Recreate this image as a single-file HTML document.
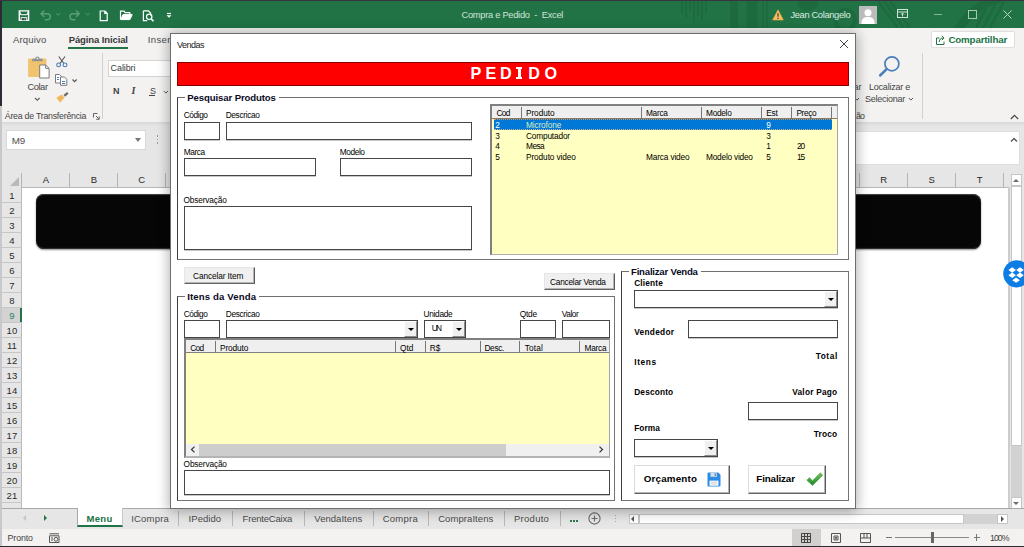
<!DOCTYPE html>
<html><head><meta charset="utf-8">
<style>
*{box-sizing:border-box;margin:0;padding:0}
html,body{width:1024px;height:547px;overflow:hidden;background:#fff;font-family:"Liberation Sans",sans-serif;font-size:11px;color:#000}
.a{position:absolute}
.t{position:absolute;white-space:nowrap;line-height:1}
#win{position:absolute;left:0;top:0;width:1024px;height:547px;background:#e6e6e6;overflow:hidden}
#dlg{left:170px;top:33px;width:686px;height:476px;background:#fff;border:1px solid #6e6e6e;box-shadow:0 1px 12px 1px rgba(0,0,0,.32)}
.tb{position:absolute;background:#fff;border:1px solid #464646;box-shadow:0 1px 0 rgba(0,0,0,.22)}
.fr{position:absolute;border:1px solid #747474;border-left-color:#3e3e3e;border-top-color:#707070}
.btn{position:absolute;background:#f0f0f0;border:1px solid #e6e6e6;border-right-color:#5a5a5a;border-bottom-color:#646464;box-shadow:inset -1px -1px 0 #b4b4b4}
.big{background:#fff;border-top-color:#dcdcdc;border-left-color:#dcdcdc}
.dd{position:absolute;width:12.700px;background:#f0f0f0;border:1px solid #fff;border-right-color:#8c8c8c;border-bottom-color:#8c8c8c}
.dd:after{content:"";position:absolute;left:2.500px;top:50%;margin-top:-1px;border:3px solid transparent;border-top:3px solid #000;border-bottom:0}
</style></head><body>
<div id="win">
<div class="a" style="left:0px;top:0px;width:1024px;height:547px;background:#e6e6e6;"></div>
<div class="a" style="left:2px;top:1px;width:1022px;height:27px;background:#217346;"></div>
<svg class="a" style="left:0;top:1px" width="1024" height="27" viewBox="0 1 1024 27"><g fill="none" stroke="#1e6a3f"><path d="M682 1v13M686 1v17M690 1v10M694 1v22M698 1v15M702 1v19M706 1v12" stroke-width="2"/><path d="M734 1v27" stroke-width="8"/><path d="M752 1v27" stroke-width="11"/><path d="M763 1v27M767 1v27" stroke-width="1.500"/><circle cx="845" cy="20" r="10" stroke-width="4"/><circle cx="1016" cy="62" r="66" stroke-width="9"/><path d="M878 1l20 27M884 1l20 27M890 1l20 27" stroke-width="2.500"/><path d="M990 1l-14 27M997 1l-14 27M1004 1l-14 27" stroke-width="2.500"/></g><path d="M797 1a11 10 0 0 0 22 0z" fill="#1e6a3f"/></svg>
<svg class="a" style="left:0;top:0" width="200" height="28" viewBox="0 0 200 28" fill="none" stroke="#fff" stroke-width="1.3">
<path d="M19.300 10.900h9.300v9.500h-9.300z" stroke-width="1.400"/><path d="M20 11.500v1.500q0 1.700 1.700 1.700h4.500q1.700 0 1.700-1.700v-1.500" stroke-width="1.100"/><rect x="20.700" y="17.200" width="6.500" height="3.400" fill="#fff" stroke="none"/><rect x="21.600" y="18" width="2.800" height="2.300" fill="#4a4a4a" stroke="none"/><rect x="24.400" y="18" width="1.900" height="2.300" fill="#217346" stroke="none"/>
<g stroke="#5a9e78" stroke-width="1.400"><path d="M41 13.700h6.300a3 3 0 0 1 0 6h-2.600 M44.200 10.500l-3.200 3.200l3.200 3.200"/><path d="M56.400 13.300l1.800 1.800l1.800-1.800" stroke-width="1"/>
<path d="M79.200 13.700h-6.300a3 3 0 0 0 0 6h2.600 M76 10.500l3.200 3.200l-3.200 3.200"/><path d="M85.900 13.300l1.800 1.800l1.800-1.800" stroke-width="1"/></g>
<path d="M100.200 11h4.800l2.200 2.300v7.300h-7z M104.800 11v2.500h2.400" stroke-width="1.200"/>
<path d="M120.500 19.500v-8.300h3.600l1 1.400h4.700v1.700" stroke-width="1.200"/><path d="M120.700 19.600l2.300-5h9.200l-2.300 5z" fill="#fff" stroke-width="1"/>
<path d="M143.400 10.800h5l2.200 2.200v2.500 M143.400 10.800v9.900h3.800" stroke-width="1.200"/><circle cx="149.200" cy="16.800" r="2.700" stroke-width="1.200"/><path d="M151.200 18.900l2.300 2.400" stroke-width="1.600"/>
<path d="M167 13.500h4" stroke-width="1.200"/><path d="M166.500 15.200l2.500 2.600l2.500-2.600z" fill="#fff" stroke="none"/>
</svg>
<div class="t" style="left:461.50px;top:11px;font-size:9.3px;color:#cfe4d7;letter-spacing:-0.277px;white-space:pre;">Compra e Pedido  -  Excel</div>
<svg class="a" style="left:772px;top:8.500px" width="12" height="12" viewBox="0 0 12 12"><path d="M6 .8L11.400 11H.6z" fill="#f6bd62" stroke="#e9a83a" stroke-width=".6"/><path d="M6 4.200v3.600M6 8.800v1.200" stroke="#3a3a3a" stroke-width="1.200"/></svg>
<div class="t" style="left:790.40px;top:11px;font-size:9.3px;color:#dcebe2;letter-spacing:-0.333px;">Jean Colangelo</div>
<svg class="a" style="left:859px;top:6px" width="18" height="18" viewBox="0 0 18 18"><rect width="18" height="18" fill="#bcbcbc"/><circle cx="9" cy="6.800" r="3.500" fill="#fff"/><path d="M2.300 18c0-5.300 2.700-7 6.700-7s6.700 1.700 6.700 7z" fill="#fff"/></svg>
<svg class="a" style="left:897px;top:9px" width="12" height="10" viewBox="0 0 12 10" fill="none" stroke="#cfe3d6" stroke-width="1"><rect x=".5" y=".5" width="10" height="8"/><path d="M.5 3h10M5.500 7.500v-3M4 5.500l1.500-1.500l1.500 1.500"/></svg>
<div class="a" style="left:934px;top:13.5px;width:8px;height:1px;background:#86b59c;"></div>
<div class="a" style="left:968px;top:10px;width:8.500px;height:8.500px;border:1px solid #a5c9b5"></div>
<svg class="a" style="left:1003px;top:10px" width="9" height="9" viewBox="0 0 9 9"><path d="M.5 .5l8 8M8.500 .5l-8 8" stroke="#bad7c6" stroke-width="1"/></svg>
<div class="a" style="left:2px;top:28px;width:1022px;height:94px;background:#f3f2f1;"></div>
<div class="t" style="left:12.90px;top:35px;font-size:9.5px;color:#4a4a4a;letter-spacing:0.181px;">Arquivo</div>
<div class="t" style="left:68.70px;top:35px;font-size:9.5px;color:#3a3a3a;letter-spacing:-0.109px;font-weight:bold;">Página Inicial</div>
<div class="a" style="left:68px;top:46.5px;width:60px;height:2px;background:#217346;"></div>
<div class="t" style="left:147.80px;top:35px;font-size:9.5px;color:#4a4a4a;letter-spacing:.35px;">Inseri</div>
<svg class="a" style="left:26px;top:54px" width="26" height="26" viewBox="26 54 26 26"><rect x="28.100" y="58.400" width="18.300" height="18.500" rx="1" fill="#f0c46f"/><path d="M32.200 61.300v-2.500h3a2.200 2.200 0 0 1 4.400 0h3v2.500z" fill="#8e9296"/><circle cx="37.400" cy="58.300" r=".9" fill="#f3f2f1"/><path d="M39.700 65h6l3.400 3.400v9.600h-9.400z" fill="#fff" stroke="#7a7a7a" stroke-width="1"/><path d="M45.700 65v3.400h3.400" fill="none" stroke="#7a7a7a" stroke-width="1"/></svg>
<div class="t" style="left:27.40px;top:83px;font-size:9.3px;color:#444;letter-spacing:-0.407px;">Colar</div>
<svg class="a" style="left:34px;top:96.500px" width="7" height="5" viewBox="0 0 7 5"><path d="M1 1l2.300 2.300l2.300-2.300" fill="none" stroke="#555" stroke-width="1.100"/></svg>
<svg class="a" style="left:56px;top:55.500px" width="12" height="12" viewBox="0 0 12 12" fill="none"><path d="M2.800 .5l5 7M9 .5l-5 7" stroke="#555" stroke-width="1.100"/><circle cx="2.600" cy="8.900" r="1.900" stroke="#4a7ebb" stroke-width="1.100"/><circle cx="9" cy="8.900" r="1.900" stroke="#4a7ebb" stroke-width="1.100"/></svg>
<svg class="a" style="left:55px;top:73.500px" width="23" height="12" viewBox="0 0 23 12" fill="none"><path d="M.5 .5h4l2 2v6.500h-6z" fill="#fff" stroke="#7a7a7a"/><path d="M5.500 3h4l2.300 2.300v6h-6.300z" fill="#fff" stroke="#7a7a7a"/><path d="M7 7.500h3.200M7 9.500h3.200" stroke="#4a7ebb"/><path d="M2 3.500h2M2 5.500h2" stroke="#4a7ebb"/><path d="M17.500 5.500l2.100 2.100l2.100-2.100" stroke="#555" stroke-width="1.100"/></svg>
<svg class="a" style="left:56px;top:92px" width="13" height="11" viewBox="0 0 13 11"><path d="M7.500 3l3.500-3l1.500 1.700l-3.500 3z" fill="#6a6a72"/><path d="M.3 5.800l5.200-3.300l3 3.200l-4.300 4.800z" fill="#eeb95c"/></svg>
<div class="t" style="left:4.80px;top:112px;font-size:8.8px;color:#444;letter-spacing:-0.245px;">Área de Transferência</div>
<svg class="a" style="left:93px;top:113px" width="7" height="7" viewBox="0 0 7 7" fill="none" stroke="#666"><path d="M.5 4.500v-4h4M3 3l3 3M6.200 3.300v3h-3"/></svg>
<div class="a" style="left:101.5px;top:53px;width:1px;height:66px;background:#d2d0ce;"></div>
<div class="a" style="left:108px;top:59.500px;width:70px;height:17px;background:#fff;border:1px solid #d4d4d4"></div>
<div class="t" style="left:110.60px;top:64px;font-size:9px;color:#3a3a3a;letter-spacing:-0.101px;">Calibri</div>
<div class="t" style="left:112.90px;top:87px;font-size:9px;color:#444;font-weight:bold;">N</div>
<div class="t" style="left:131.40px;top:86px;font-size:10px;color:#444;font-weight:bold;font-style:italic;font-family:'Liberation Serif',serif;">I</div>
<div class="t" style="left:149.90px;top:87px;font-size:9px;color:#444;">S</div>
<div class="a" style="left:149px;top:95.3px;width:6.2px;height:1px;background:#444;"></div>
<svg class="a" style="left:162.500px;top:90px" width="6" height="5" viewBox="0 0 6 5"><path d="M.8 1l2.100 2.100l2.100-2.100" fill="none" stroke="#555" stroke-width="1"/></svg>
<div class="t" style="left:853.60px;top:83px;font-size:9px;color:#444;">ar</div>
<svg class="a" style="left:853.500px;top:97px" width="6" height="5" viewBox="0 0 6 5"><path d="M.8 1l2.100 2.100l2.100-2.100" fill="none" stroke="#555" stroke-width="1"/></svg>
<div class="t" style="left:856.00px;top:112px;font-size:8.8px;color:#444;letter-spacing:-0.786px;">ão</div>
<svg class="a" style="left:877px;top:54px" width="26" height="26" viewBox="877 54 26 26" fill="none"><circle cx="891.900" cy="63.800" r="7" stroke="#4a7ebb" stroke-width="1.700"/><path d="M886.600 69.200l-6.500 6.300" stroke="#4a7ebb" stroke-width="2.500" stroke-linecap="round"/></svg>
<div class="t" style="left:869.00px;top:83px;font-size:9px;color:#444;letter-spacing:-0.222px;">Localizar e</div>
<div class="t" style="left:865.10px;top:95px;font-size:9px;color:#444;letter-spacing:-0.258px;">Selecionar</div>
<svg class="a" style="left:907.500px;top:97px" width="6" height="5" viewBox="0 0 6 5"><path d="M.8 1l2.100 2.100l2.100-2.100" fill="none" stroke="#555" stroke-width="1"/></svg>
<div class="a" style="left:921.5px;top:53px;width:1px;height:66px;background:#d2d0ce;"></div>
<div class="a" style="left:930.500px;top:30.500px;width:84px;height:17px;background:#fff;border:1px solid #dedede;border-radius:2px"></div>
<svg class="a" style="left:936px;top:34.500px" width="10" height="10" viewBox="0 0 10 10" fill="none" stroke="#217346" stroke-width="1"><path d="M3.500 3h-3v6.500h7.500v-3"/><path d="M3.300 7c0-2.800 1.700-4 4.300-4M5.800 .8l2.300 2.200l-2.300 2.200"/></svg>
<div class="t" style="left:948.40px;top:35px;font-size:9.8px;color:#217346;letter-spacing:-0.190px;font-weight:bold;">Compartilhar</div>
<svg class="a" style="left:1009.500px;top:114px" width="9" height="6" viewBox="0 0 9 6"><path d="M.8 5l3.700-3.700l3.700 3.700" fill="none" stroke="#4a4a4a" stroke-width="1.300"/></svg>
<div class="a" style="left:2px;top:122px;width:1022px;height:4px;background:linear-gradient(#d8d8d8,#e6e6e6)"></div>
<div class="a" style="left:0px;top:0px;width:2px;height:106px;background:#2d2b36;"></div>
<div class="a" style="left:0px;top:106px;width:2px;height:441px;background:#c8c8cc;"></div>
<div class="a" style="left:0px;top:0px;width:1024px;height:1px;background:#3b3340;"></div>
<div class="a" style="left:6px;top:130px;width:140px;height:19.500px;background:#fff;border:1px solid #d8d8d8"></div>
<div class="t" style="left:11.70px;top:136px;font-size:9.8px;color:#505050;letter-spacing:-0.112px;">M9</div>
<div class="a" style="left:135px;top:138px;border:3.500px solid transparent;border-top:4px solid #777;border-bottom:0"></div>
<div class="a" style="left:157px;top:135px;width:1px;height:1.5px;background:#999;"></div>
<div class="a" style="left:157px;top:138.5px;width:1px;height:1.5px;background:#999;"></div>
<div class="a" style="left:157px;top:142px;width:1px;height:1.5px;background:#999;"></div>
<div class="a" style="left:170px;top:130.500px;width:850px;height:34.500px;background:#fff;border:1px solid #dedede"></div>
<svg class="a" style="left:1010px;top:136.500px" width="8" height="6" viewBox="0 0 8 6"><path d="M1 4.500l3-3l3 3" fill="none" stroke="#555" stroke-width="1.400"/></svg>
<div class="a" style="left:2px;top:172px;width:1006px;height:337px;background:#fff;"></div>
<div class="a" style="left:2px;top:172px;width:1006px;height:15.5px;background:#e6e6e6;border-bottom:1px solid #b8b8b8;height:16px"></div>
<div class="a" style="left:2px;top:187px;width:19.7px;height:322px;background:#e6e6e6;border-right:1px solid #b8b8b8;width:20px"></div>
<div class="a" style="left:10px;top:176.500px;border-left:9px solid transparent;border-bottom:9px solid #b9b9b9"></div>
<div class="a" style="left:21px;top:173px;width:1px;height:14px;background:#b4b4b4;"></div>
<div class="a" style="left:69px;top:173px;width:1px;height:14px;background:#b4b4b4;"></div>
<div class="a" style="left:117px;top:173px;width:1px;height:14px;background:#b4b4b4;"></div>
<div class="a" style="left:165px;top:173px;width:1px;height:14px;background:#b4b4b4;"></div>
<div class="a" style="left:859px;top:173px;width:1px;height:14px;background:#b4b4b4;"></div>
<div class="a" style="left:907px;top:173px;width:1px;height:14px;background:#b4b4b4;"></div>
<div class="a" style="left:955px;top:173px;width:1px;height:14px;background:#b4b4b4;"></div>
<div class="a" style="left:1003px;top:173px;width:1px;height:14px;background:#b4b4b4;"></div>
<div class="t" style="left:42.63px;top:175px;font-size:9.5px;color:#262626;">A</div>
<div class="t" style="left:90.63px;top:175px;font-size:9.5px;color:#262626;">B</div>
<div class="t" style="left:138.37px;top:175px;font-size:9.5px;color:#262626;">C</div>
<div class="t" style="left:880.17px;top:175px;font-size:9.5px;color:#262626;">R</div>
<div class="t" style="left:928.43px;top:175px;font-size:9.5px;color:#262626;">S</div>
<div class="t" style="left:976.70px;top:175px;font-size:9.5px;color:#262626;">T</div>
<div class="a" style="left:2px;top:202.0px;width:19.5px;height:1px;background:#c6c6c6;"></div>
<div class="t" style="left:9.26px;top:191px;font-size:9.5px;color:#2a2a2a;">1</div>
<div class="a" style="left:2px;top:217.0px;width:19.5px;height:1px;background:#c6c6c6;"></div>
<div class="t" style="left:9.26px;top:206px;font-size:9.5px;color:#2a2a2a;">2</div>
<div class="a" style="left:2px;top:232.0px;width:19.5px;height:1px;background:#c6c6c6;"></div>
<div class="t" style="left:9.26px;top:221px;font-size:9.5px;color:#2a2a2a;">3</div>
<div class="a" style="left:2px;top:247.0px;width:19.5px;height:1px;background:#c6c6c6;"></div>
<div class="t" style="left:9.26px;top:236px;font-size:9.5px;color:#2a2a2a;">4</div>
<div class="a" style="left:2px;top:262.0px;width:19.5px;height:1px;background:#c6c6c6;"></div>
<div class="t" style="left:9.26px;top:251px;font-size:9.5px;color:#2a2a2a;">5</div>
<div class="a" style="left:2px;top:277.0px;width:19.5px;height:1px;background:#c6c6c6;"></div>
<div class="t" style="left:9.26px;top:266px;font-size:9.5px;color:#2a2a2a;">6</div>
<div class="a" style="left:2px;top:292.0px;width:19.5px;height:1px;background:#c6c6c6;"></div>
<div class="t" style="left:9.26px;top:281px;font-size:9.5px;color:#2a2a2a;">7</div>
<div class="a" style="left:2px;top:307.0px;width:19.5px;height:1px;background:#c6c6c6;"></div>
<div class="t" style="left:9.26px;top:296px;font-size:9.5px;color:#2a2a2a;">8</div>
<div class="a" style="left:2px;top:308.0px;width:19.5px;height:14.5px;background:#d3d3d3;border-right:2px solid #217346;width:20px"></div>
<div class="a" style="left:2px;top:322.0px;width:19.5px;height:1px;background:#c6c6c6;"></div>
<div class="t" style="left:9.26px;top:311px;font-size:9.5px;color:#2e8058;">9</div>
<div class="a" style="left:2px;top:337.0px;width:19.5px;height:1px;background:#c6c6c6;"></div>
<div class="t" style="left:6.62px;top:326px;font-size:9.5px;color:#2a2a2a;">10</div>
<div class="a" style="left:2px;top:352.0px;width:19.5px;height:1px;background:#c6c6c6;"></div>
<div class="t" style="left:6.97px;top:341px;font-size:9.5px;color:#2a2a2a;">11</div>
<div class="a" style="left:2px;top:367.0px;width:19.5px;height:1px;background:#c6c6c6;"></div>
<div class="t" style="left:6.62px;top:356px;font-size:9.5px;color:#2a2a2a;">12</div>
<div class="a" style="left:2px;top:382.0px;width:19.5px;height:1px;background:#c6c6c6;"></div>
<div class="t" style="left:6.62px;top:371px;font-size:9.5px;color:#2a2a2a;">13</div>
<div class="a" style="left:2px;top:397.0px;width:19.5px;height:1px;background:#c6c6c6;"></div>
<div class="t" style="left:6.62px;top:386px;font-size:9.5px;color:#2a2a2a;">14</div>
<div class="a" style="left:2px;top:412.0px;width:19.5px;height:1px;background:#c6c6c6;"></div>
<div class="t" style="left:6.62px;top:401px;font-size:9.5px;color:#2a2a2a;">15</div>
<div class="a" style="left:2px;top:427.0px;width:19.5px;height:1px;background:#c6c6c6;"></div>
<div class="t" style="left:6.62px;top:416px;font-size:9.5px;color:#2a2a2a;">16</div>
<div class="a" style="left:2px;top:442.0px;width:19.5px;height:1px;background:#c6c6c6;"></div>
<div class="t" style="left:6.62px;top:431px;font-size:9.5px;color:#2a2a2a;">17</div>
<div class="a" style="left:2px;top:457.0px;width:19.5px;height:1px;background:#c6c6c6;"></div>
<div class="t" style="left:6.62px;top:446px;font-size:9.5px;color:#2a2a2a;">18</div>
<div class="a" style="left:2px;top:472.0px;width:19.5px;height:1px;background:#c6c6c6;"></div>
<div class="t" style="left:6.62px;top:461px;font-size:9.5px;color:#2a2a2a;">19</div>
<div class="a" style="left:2px;top:487.0px;width:19.5px;height:1px;background:#c6c6c6;"></div>
<div class="t" style="left:6.62px;top:476px;font-size:9.5px;color:#2a2a2a;">20</div>
<div class="a" style="left:2px;top:502.0px;width:19.5px;height:1px;background:#c6c6c6;"></div>
<div class="t" style="left:6.62px;top:491px;font-size:9.5px;color:#2a2a2a;">21</div>
<div class="a" style="left:2px;top:517.0px;width:19.5px;height:1px;background:#c6c6c6;"></div>
<div class="t" style="left:6.62px;top:506px;font-size:9.5px;color:#2a2a2a;">22</div>
<div class="a" style="left:36px;top:193.700px;width:944.500px;height:55.800px;background:#060606;border-radius:8px;box-shadow:inset 0 1px 1px #4a4a4a, inset 0 -1px 1px #333, 0 1px 2px rgba(0,0,0,.45)"></div>
<div class="a" style="left:1008px;top:172px;width:16px;height:337px;background:#e6e6e6;"></div>
<div class="a" style="left:1007.5px;top:187px;width:2.5px;height:322px;background:#cdcdcd;"></div>
<div class="a" style="left:1011px;top:174px;width:10.500px;height:12px;background:#fff;border:1px solid #c6c6c6"></div>
<div class="a" style="left:1013.200px;top:178.500px;border:3px solid transparent;border-bottom:3.500px solid #6a6a6a;border-top:0"></div>
<div class="a" style="left:1011px;top:186px;width:10.500px;height:260px;background:#fff;border:1px solid #c6c6c6"></div>
<div class="a" style="left:1011px;top:446px;width:10.5px;height:51px;background:#d2d2d2;"></div>
<div class="a" style="left:1011px;top:497px;width:10.500px;height:12px;background:#fff;border:1px solid #c6c6c6"></div>
<div class="a" style="left:1013.200px;top:501.500px;border:3px solid transparent;border-top:3.500px solid #6a6a6a;border-bottom:0"></div>
<svg class="a" style="left:1003px;top:259.500px" width="21" height="28" viewBox="0 0 21 28"><circle cx="13.800" cy="13.800" r="13.600" fill="#0d7de6"/><path d="M9.2 7.2l3.8 2.8l-3.8 2.8l-3.8 -2.8z M17 7.2l3.8 2.8l-3.8 2.8l-3.8 -2.8z M9.2 12.5l3.8 2.8l-3.8 2.8l-3.8 -2.8z M17 12.5l3.8 2.8l-3.8 2.8l-3.8 -2.8z M13.1 17.599999999999998l3.8 2.6l-3.8 2.6l-3.8 -2.6z" fill="#fff"/></svg>
<div class="a" style="left:2px;top:508px;width:1022px;height:21px;background:#e6e6e6;border-top:1px solid #a8a8a8"></div>
<div class="a" style="left:22.500px;top:514.500px;border:3.500px solid transparent;border-right:3.500px solid #c4c4c4;border-left:0"></div>
<div class="a" style="left:44px;top:514.500px;border:3.500px solid transparent;border-left:3.500px solid #217346;border-right:0"></div>
<div class="a" style="left:77px;top:508px;width:46px;height:19.300px;background:#fff;border-left:1px solid #a8a8a8;border-right:1px solid #c8c8c8;border-bottom:2px solid #217346"></div>
<div class="t" style="left:86.40px;top:514px;font-size:9.5px;color:#217346;letter-spacing:0.365px;font-weight:bold;">Menu</div>
<div class="t" style="left:131.20px;top:514px;font-size:9.5px;color:#4a4a4a;letter-spacing:0.195px;">ICompra</div>
<div class="t" style="left:188.60px;top:514px;font-size:9.5px;color:#4a4a4a;letter-spacing:0.046px;">IPedido</div>
<div class="t" style="left:242.60px;top:514px;font-size:9.5px;color:#4a4a4a;letter-spacing:-0.206px;">FrenteCaixa</div>
<div class="t" style="left:314.30px;top:514px;font-size:9.5px;color:#4a4a4a;letter-spacing:0.040px;">VendaItens</div>
<div class="t" style="left:382.70px;top:514px;font-size:9.5px;color:#4a4a4a;letter-spacing:0.260px;">Compra</div>
<div class="t" style="left:438.20px;top:514px;font-size:9.5px;color:#4a4a4a;letter-spacing:0.071px;">CompraItens</div>
<div class="t" style="left:514.00px;top:514px;font-size:9.5px;color:#4a4a4a;letter-spacing:0.272px;">Produto</div>
<div class="a" style="left:178.4px;top:511px;width:1px;height:14.5px;background:#b8b8b8;"></div>
<div class="a" style="left:232.1px;top:511px;width:1px;height:14.5px;background:#b8b8b8;"></div>
<div class="a" style="left:303.8px;top:511px;width:1px;height:14.5px;background:#b8b8b8;"></div>
<div class="a" style="left:373.4px;top:511px;width:1px;height:14.5px;background:#b8b8b8;"></div>
<div class="a" style="left:427.6px;top:511px;width:1px;height:14.5px;background:#b8b8b8;"></div>
<div class="a" style="left:504.3px;top:511px;width:1px;height:14.5px;background:#b8b8b8;"></div>
<div class="a" style="left:559.5px;top:511px;width:1px;height:14.5px;background:#b8b8b8;"></div>
<div class="a" style="left:570px;top:520px;width:2px;height:2px;background:#2a7a4e;"></div>
<div class="a" style="left:573px;top:520px;width:2px;height:2px;background:#2a7a4e;"></div>
<div class="a" style="left:576px;top:520px;width:2px;height:2px;background:#2a7a4e;"></div>
<svg class="a" style="left:587.500px;top:512px" width="13" height="13" viewBox="0 0 13 13" fill="none" stroke="#6a6a6a" stroke-width="1.100"><circle cx="6.500" cy="6.500" r="5.600"/><path d="M6.500 3.500v6M3.500 6.500h6"/></svg>
<div class="a" style="left:615.2px;top:515px;width:1px;height:1.3px;background:#aaa;"></div>
<div class="a" style="left:615.2px;top:518px;width:1px;height:1.3px;background:#aaa;"></div>
<div class="a" style="left:615.2px;top:521px;width:1px;height:1.3px;background:#aaa;"></div>
<div class="a" style="left:628.500px;top:514px;width:10px;height:10px;background:#fff;border:1px solid #c6c6c6"></div>
<div class="a" style="left:631px;top:516px;border:3px solid transparent;border-right:3.500px solid #555;border-left:0"></div>
<div class="a" style="left:638.500px;top:514px;width:325.500px;height:10px;background:#fff;border:1px solid #c6c6c6"></div>
<div class="a" style="left:964px;top:514px;width:33px;height:10px;background:#d2d2d2;"></div>
<div class="a" style="left:997px;top:514px;width:10.500px;height:10px;background:#fff;border:1px solid #c6c6c6"></div>
<div class="a" style="left:1001px;top:516px;border:3px solid transparent;border-left:3.500px solid #555;border-right:0"></div>
<div class="a" style="left:2px;top:529px;width:1022px;height:17px;background:#f3f2f1;"></div>
<div class="t" style="left:7.60px;top:534px;font-size:8.8px;color:#444;letter-spacing:-0.105px;">Pronto</div>
<svg class="a" style="left:49px;top:532.500px" width="11" height="10" viewBox="0 0 11 10" fill="none" stroke="#555"><path d="M.5 .8h9.500M.5 2.800h9.500v6.700h-9.500z" /><circle cx="7" cy="6.300" r="1.900"/><path d="M2 5h2M2 7h2"/></svg>
<div class="a" style="left:791.5px;top:529px;width:29px;height:17px;background:#d2d0ce;"></div>
<svg class="a" style="left:800.500px;top:532.500px" width="10" height="10" viewBox="0 0 10 10" fill="none" stroke="#444"><path d="M.5 .5h9v9h-9zM.5 3.500h9M.5 6.500h9M3.500 .5v9M6.500 .5v9"/></svg>
<svg class="a" style="left:830.500px;top:532.500px" width="10" height="10" viewBox="0 0 10 10" fill="none" stroke="#555"><path d="M.5 .5h9v9h-9zM3 3h4v4h-4zM4 4.500h2M4 5.800h2"/></svg>
<svg class="a" style="left:860px;top:532.500px" width="11" height="10" viewBox="0 0 11 10" fill="none" stroke="#555"><path d="M.5 .5h10v9h-10zM.5 5h10M4 .5v4.500M7 .5v4.500"/></svg>
<div class="a" style="left:886px;top:537px;width:5.5px;height:1px;background:#777;"></div>
<div class="a" style="left:895px;top:537px;width:74px;height:1px;background:#8a8a8a;"></div>
<div class="a" style="left:931.3px;top:532px;width:3px;height:10.5px;background:#666;"></div>
<div class="a" style="left:973.5px;top:537px;width:6.5px;height:1px;background:#777;"></div>
<div class="a" style="left:976.2px;top:534px;width:1px;height:7px;background:#777;"></div>
<div class="t" style="left:990.00px;top:534px;font-size:8.8px;color:#444;letter-spacing:-1.003px;">100%</div>
<div class="a" style="left:0px;top:546px;width:1024px;height:1px;background:#2d2b36;"></div>
<div class="a" id="dlg"></div>
<div class="t" style="left:177.00px;top:41px;font-size:9px;color:#222;letter-spacing:-0.505px;">Vendas</div>
<svg class="a" style="left:839px;top:39px" width="10" height="10" viewBox="0 0 10 10"><path d="M1 1l8 8M9 1l-8 8" stroke="#383838" stroke-width=".95"/></svg>
<div class="a" style="left:177px;top:62.300px;width:672px;height:23.500px;background:#fe0000;border:1px solid #8a0000"></div>
<div class="t" style="left:470.60px;top:65px;font-size:16.2px;color:#fff;font-weight:bold;">P</div>
<div class="t" style="left:485.50px;top:65px;font-size:16.2px;color:#fff;font-weight:bold;">E</div>
<div class="t" style="left:500.00px;top:65px;font-size:16.2px;color:#fff;font-weight:bold;">D</div>
<div class="t" style="left:528.30px;top:65px;font-size:16.2px;color:#fff;font-weight:bold;">D</div>
<div class="t" style="left:544.40px;top:65px;font-size:16.2px;color:#fff;font-weight:bold;">O</div>
<div class="a" style="left:516px;top:67px;width:6.400px;height:12px"><div class="a" style="left:0;top:0;width:6.400px;height:2px;background:#fff"></div><div class="a" style="left:1.700px;top:0;width:3px;height:12px;background:#fff"></div><div class="a" style="left:0;top:10px;width:6.400px;height:2px;background:#fff"></div></div>
<div class="fr" style="left:177px;top:97px;width:672px;height:163px"></div>
<div class="a" style="left:184.5px;top:92px;width:94px;height:11px;background:#fff;"></div>
<div class="t" style="left:187.30px;top:93px;font-size:9.6px;color:#0a0a1e;letter-spacing:-0.117px;font-weight:bold;">Pesquisar Produtos</div>
<div class="t" style="left:183.80px;top:111px;font-size:8.3px;color:#000;letter-spacing:-0.421px;">Código</div>
<div class="t" style="left:225.70px;top:111px;font-size:8.3px;color:#000;letter-spacing:-0.338px;">Descricao</div>
<div class="tb" style="left:184px;top:122px;width:36px;height:18px"></div>
<div class="tb" style="left:226px;top:122px;width:246px;height:18px"></div>
<div class="t" style="left:183.80px;top:148px;font-size:8.3px;color:#000;letter-spacing:-0.441px;">Marca</div>
<div class="t" style="left:339.80px;top:148px;font-size:8.3px;color:#000;letter-spacing:-0.405px;">Modelo</div>
<div class="tb" style="left:184px;top:158px;width:132px;height:18px"></div>
<div class="tb" style="left:340px;top:158px;width:132px;height:18px"></div>
<div class="t" style="left:183.50px;top:196px;font-size:8.3px;color:#000;letter-spacing:-0.162px;">Observação</div>
<div class="tb" style="left:184px;top:206px;width:288px;height:44px"></div>
<div class="a" style="left:490px;top:104px;width:348px;height:151px;background:#ffffc1;border:2px solid #808080;border-right:1px solid #a4a4b0;border-bottom:1px solid #b0b0b0;box-shadow:inset 0 1px 0 #b0b0b0"></div>
<div class="a" style="left:492px;top:106px;width:345px;height:12.5px;background:#efefef;border-bottom:1px solid #8a7a6a"></div>
<div class="a" style="left:520.6px;top:106.5px;width:1.2px;height:12px;background:#777;"></div>
<div class="a" style="left:640.9px;top:106.5px;width:1.2px;height:12px;background:#777;"></div>
<div class="a" style="left:700.9px;top:106.5px;width:1.2px;height:12px;background:#777;"></div>
<div class="a" style="left:760.8px;top:106.5px;width:1.2px;height:12px;background:#777;"></div>
<div class="a" style="left:790.9px;top:106.5px;width:1.2px;height:12px;background:#777;"></div>
<div class="a" style="left:831.2px;top:106.5px;width:1.2px;height:12px;background:#777;"></div>
<div class="t" style="left:496.40px;top:109px;font-size:8.3px;color:#000;letter-spacing:-0.611px;">Cod</div>
<div class="t" style="left:526.00px;top:109px;font-size:8.3px;color:#000;letter-spacing:-0.094px;">Produto</div>
<div class="t" style="left:645.90px;top:109px;font-size:8.3px;color:#000;letter-spacing:-0.241px;">Marca</div>
<div class="t" style="left:706.00px;top:109px;font-size:8.3px;color:#000;letter-spacing:-0.285px;">Modelo</div>
<div class="t" style="left:766.30px;top:109px;font-size:8.3px;color:#000;letter-spacing:-0.247px;">Est</div>
<div class="t" style="left:796.40px;top:109px;font-size:8.3px;color:#000;letter-spacing:-0.370px;">Preço</div>
<div class="a" style="left:493.800px;top:118.700px;width:338px;height:11px;background:#0078d7;border-top:1px dotted #c89860;border-bottom:1px dotted #c8b090"></div>
<div class="t" style="left:495.20px;top:121px;font-size:8.3px;color:#fff;">2</div>
<div class="t" style="left:526.00px;top:121px;font-size:8.3px;color:#d8ecc0;letter-spacing:-0.143px;">Microfone</div>
<div class="t" style="left:766.30px;top:121px;font-size:8.3px;color:#fff;">9</div>
<div class="t" style="left:495.20px;top:132px;font-size:8.3px;color:#000;">3</div>
<div class="t" style="left:526.00px;top:132px;font-size:8.3px;color:#000;letter-spacing:-0.175px;">Computador</div>
<div class="t" style="left:766.30px;top:132px;font-size:8.3px;color:#000;">3</div>
<div class="t" style="left:495.20px;top:142px;font-size:8.3px;color:#000;">4</div>
<div class="t" style="left:526.00px;top:142px;font-size:8.3px;color:#000;letter-spacing:-0.534px;">Mesa</div>
<div class="t" style="left:766.30px;top:142px;font-size:8.3px;color:#000;">1</div>
<div class="t" style="left:797.00px;top:142px;font-size:8.3px;color:#000;letter-spacing:-1.030px;">20</div>
<div class="t" style="left:495.20px;top:153px;font-size:8.3px;color:#000;">5</div>
<div class="t" style="left:526.00px;top:153px;font-size:8.3px;color:#000;letter-spacing:-0.102px;">Produto video</div>
<div class="t" style="left:645.90px;top:153px;font-size:8.3px;color:#000;letter-spacing:-0.141px;">Marca video</div>
<div class="t" style="left:706.00px;top:153px;font-size:8.3px;color:#000;letter-spacing:-0.215px;">Modelo video</div>
<div class="t" style="left:766.30px;top:153px;font-size:8.3px;color:#000;">5</div>
<div class="t" style="left:797.00px;top:153px;font-size:8.3px;color:#000;letter-spacing:-1.030px;">15</div>
<div class="btn" style="left:184px;top:267px;width:71px;height:17px"></div>
<div class="t" style="left:193.00px;top:272px;font-size:8.3px;color:#000;letter-spacing:-0.106px;">Cancelar Item</div>
<div class="btn" style="left:544px;top:273px;width:71px;height:17px"></div>
<div class="t" style="left:550.00px;top:278px;font-size:8.3px;color:#000;letter-spacing:-0.236px;">Cancelar Venda</div>
<div class="fr" style="left:177px;top:296px;width:438px;height:205px"></div>
<div class="a" style="left:184.5px;top:290px;width:74px;height:11px;background:#fff;"></div>
<div class="t" style="left:187.20px;top:292px;font-size:9.6px;color:#0a0a1e;letter-spacing:0.124px;font-weight:bold;">Itens da Venda</div>
<div class="t" style="left:183.80px;top:310px;font-size:8.3px;color:#000;letter-spacing:-0.461px;">Código</div>
<div class="t" style="left:225.80px;top:310px;font-size:8.3px;color:#000;letter-spacing:-0.338px;">Descricao</div>
<div class="t" style="left:423.60px;top:310px;font-size:8.3px;color:#000;letter-spacing:-0.320px;">Unidade</div>
<div class="t" style="left:519.70px;top:310px;font-size:8.3px;color:#000;letter-spacing:-0.165px;">Qtde</div>
<div class="t" style="left:561.80px;top:310px;font-size:8.3px;color:#000;letter-spacing:-0.464px;">Valor</div>
<div class="tb" style="left:184px;top:320px;width:36px;height:18px"></div>
<div class="tb" style="left:226px;top:320px;width:192px;height:18px"></div>
<div class="dd" style="left:404.3px;top:321px;height:16px"></div>
<div class="tb" style="left:424px;top:320px;width:42px;height:18px"></div>
<div class="dd" style="left:452.3px;top:321px;height:16px"></div>
<div class="t" style="left:431.70px;top:324px;font-size:8.3px;color:#000;letter-spacing:-1.685px;">UN</div>
<div class="tb" style="left:520px;top:320px;width:36px;height:18px"></div>
<div class="tb" style="left:562px;top:320px;width:48px;height:18px"></div>
<div class="a" style="left:184px;top:338px;width:426px;height:120px;background:#ffffc1;border:2px solid #808080;border-right:1px solid #a4a4b0;border-bottom:2px solid #b4b4b4;box-shadow:inset 0 1px 0 #b0b0b0"></div>
<div class="a" style="left:186px;top:340px;width:423px;height:12.5px;background:#efefef;border-bottom:1px solid #808080"></div>
<div class="a" style="left:214.8px;top:340.5px;width:1.2px;height:12px;background:#777;"></div>
<div class="a" style="left:394.6px;top:340.5px;width:1.2px;height:12px;background:#777;"></div>
<div class="a" style="left:424.6px;top:340.5px;width:1.2px;height:12px;background:#777;"></div>
<div class="a" style="left:479.6px;top:340.5px;width:1.2px;height:12px;background:#777;"></div>
<div class="a" style="left:519.0px;top:340.5px;width:1.2px;height:12px;background:#777;"></div>
<div class="a" style="left:579.2px;top:340.5px;width:1.2px;height:12px;background:#777;"></div>
<div class="t" style="left:190.20px;top:344px;font-size:8.3px;color:#000;letter-spacing:-0.611px;">Cod</div>
<div class="t" style="left:220.00px;top:344px;font-size:8.3px;color:#000;letter-spacing:-0.128px;">Produto</div>
<div class="t" style="left:400.00px;top:344px;font-size:8.3px;color:#000;letter-spacing:0.010px;">Qtd</div>
<div class="t" style="left:429.80px;top:344px;font-size:8.3px;color:#000;letter-spacing:-0.007px;">R$</div>
<div class="t" style="left:484.40px;top:344px;font-size:8.3px;color:#000;letter-spacing:-0.304px;">Desc.</div>
<div class="t" style="left:524.80px;top:344px;font-size:8.3px;color:#000;letter-spacing:0.118px;">Total</div>
<div class="t" style="left:584.50px;top:344px;font-size:8.3px;color:#000;letter-spacing:-0.241px;">Marca</div>
<div class="a" style="left:186px;top:444px;width:423px;height:12px;background:#f0f0f0;"></div>
<div class="a" style="left:199.3px;top:444px;width:306.7px;height:12px;background:#cdcdcd;"></div>
<svg class="a" style="left:189.800px;top:446.200px" width="6" height="7" viewBox="0 0 6 7"><path d="M4.500 .6l-3 2.900l3 2.900" fill="none" stroke="#3a3a3a" stroke-width="1.300"/></svg>
<svg class="a" style="left:598.300px;top:446.200px" width="6" height="7" viewBox="0 0 6 7"><path d="M1.500 .6l3 2.900l-3 2.900" fill="none" stroke="#3a3a3a" stroke-width="1.300"/></svg>
<div class="t" style="left:183.60px;top:460px;font-size:8.3px;color:#000;letter-spacing:-0.150px;">Observação</div>
<div class="tb" style="left:184px;top:470px;width:426px;height:25px"></div>
<div class="fr" style="left:621px;top:271px;width:228px;height:230px"></div>
<div class="a" style="left:628.5px;top:266px;width:72px;height:11px;background:#fff;"></div>
<div class="t" style="left:631.00px;top:267px;font-size:9.6px;color:#0a0a1e;letter-spacing:-0.211px;font-weight:bold;">Finalizar Venda</div>
<div class="t" style="left:634.20px;top:279px;font-size:8.3px;color:#000;letter-spacing:0.171px;font-weight:bold;">Cliente</div>
<div class="tb" style="left:634px;top:290px;width:204px;height:18px"></div>
<div class="dd" style="left:824.3px;top:291px;height:16px"></div>
<div class="t" style="left:634.20px;top:328px;font-size:8.3px;color:#000;letter-spacing:0.297px;font-weight:bold;">Vendedor</div>
<div class="tb" style="left:688px;top:320px;width:150px;height:18px"></div>
<div class="t" style="left:815.70px;top:352px;font-size:8.3px;color:#000;letter-spacing:0.573px;font-weight:bold;">Total</div>
<div class="t" style="left:634.20px;top:358px;font-size:8.3px;color:#000;letter-spacing:0.657px;font-weight:bold;">Itens</div>
<div class="t" style="left:634.20px;top:388px;font-size:8.3px;color:#000;letter-spacing:0.169px;font-weight:bold;">Desconto</div>
<div class="t" style="left:792.20px;top:388px;font-size:8.3px;color:#000;letter-spacing:0.234px;font-weight:bold;">Valor Pago</div>
<div class="tb" style="left:748px;top:402px;width:90px;height:18px"></div>
<div class="t" style="left:634.20px;top:424px;font-size:8.3px;color:#000;letter-spacing:0.094px;font-weight:bold;">Forma</div>
<div class="t" style="left:813.80px;top:430px;font-size:8.3px;color:#000;letter-spacing:0.200px;font-weight:bold;">Troco</div>
<div class="tb" style="left:634px;top:439px;width:84px;height:18px"></div>
<div class="dd" style="left:704.3px;top:440px;height:16px"></div>
<div class="btn big" style="left:634px;top:465px;width:96px;height:29px"></div>
<div class="t" style="left:643.70px;top:474px;font-size:9.8px;color:#000;letter-spacing:0.196px;font-weight:bold;">Orçamento</div>
<svg class="a" style="left:706.500px;top:471.800px" width="14" height="15" viewBox="0 0 14 15"><path d="M.5 1.500a1 1 0 0 1 1-1h9.800l2.200 2.200v10.800a1 1 0 0 1-1 1h-11a1 1 0 0 1-1-1z" fill="#2b8ce6"/><rect x="3.500" y=".5" width="6.300" height="4.300" fill="#d6dee8"/><rect x="7.600" y="1.200" width="1.400" height="2.800" fill="#7a8ea6"/><rect x="2.500" y="8.600" width="9" height="5.200" fill="#f4f6f8"/><path d="M4 10.300h6M4 12h6" stroke="#c8ced6" stroke-width=".8"/></svg>
<div class="btn big" style="left:748px;top:465px;width:78px;height:29px"></div>
<div class="t" style="left:756.30px;top:474px;font-size:9.8px;color:#000;letter-spacing:-0.132px;font-weight:bold;">Finalizar</div>
<svg class="a" style="left:806px;top:472px" width="18" height="14" viewBox="0 0 18 14"><defs><linearGradient id="ck" x1="0" y1="0" x2="0" y2="1"><stop offset="0" stop-color="#74c454"/><stop offset="1" stop-color="#1c8a2c"/></linearGradient></defs><path d="M.8 8.200l2.600-2.600l3.100 3.100l7.800-7.900l2.500 2.400l-10.300 10.300z" fill="url(#ck)" stroke="#3c9a3c" stroke-width=".5"/></svg>
</div>
</body></html>
